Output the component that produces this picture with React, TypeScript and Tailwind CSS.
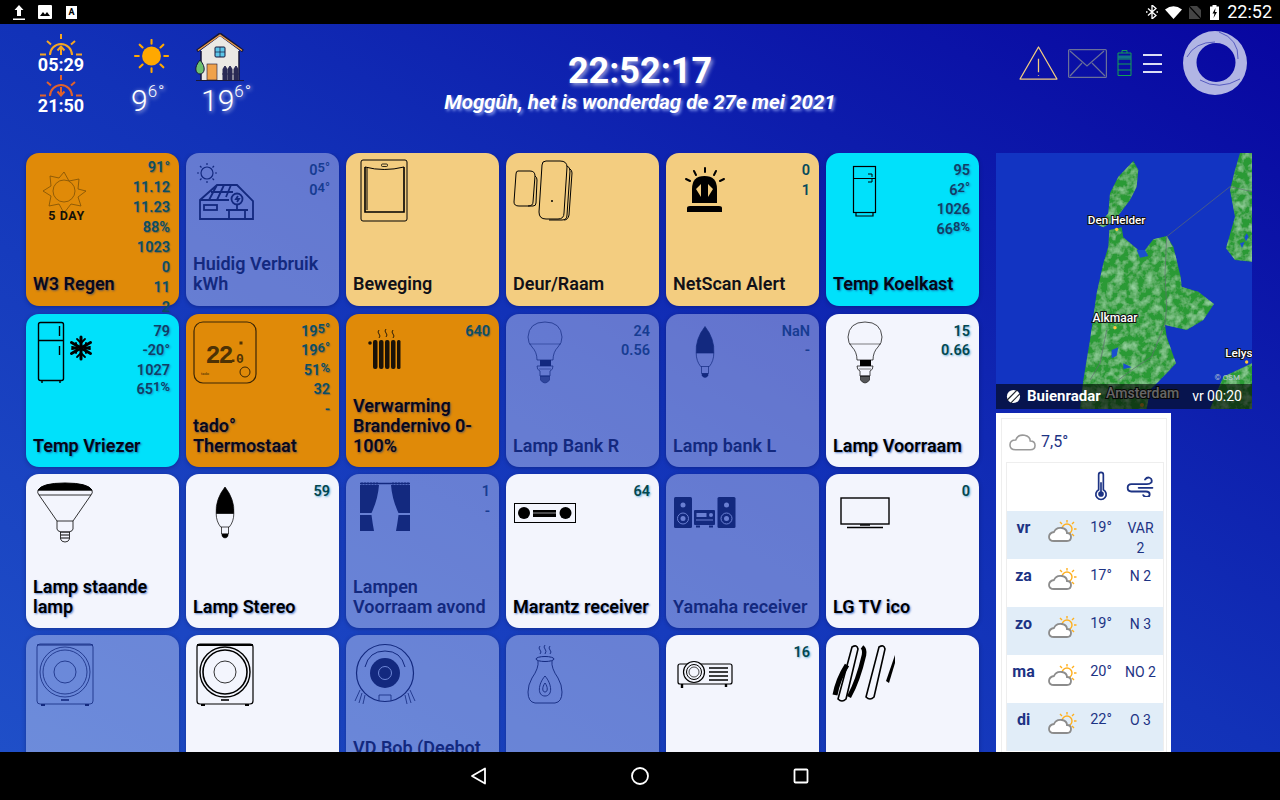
import type { ReactNode } from "react";

type Val = string | [string, string];
type Tone = "orange" | "yellow" | "cyan" | "off" | "on";
type Tile = { name?: ReactNode; tone: Tone; icon: ReactNode; values?: Val[]; tight?: boolean };

const tones: Record<Tone, { bg: string; name: string; val: string }> = {
  orange: {
    bg: "bg-[#e08a08] text-[#1a1208]",
    name: "text-[#08081c] [text-shadow:1px_1px_2px_rgba(40,60,120,0.6)]",
    val: "text-[#0a4f63] [text-shadow:1px_1px_1px_rgba(30,60,120,0.45)]",
  },
  yellow: {
    bg: "bg-[#f3cd80] text-black",
    name: "text-[#111118]",
    val: "text-[#064a5c]",
  },
  cyan: {
    bg: "bg-[#00e1fb] text-black",
    name: "text-[#060616] [text-shadow:1px_1px_2px_rgba(30,50,130,0.6)]",
    val: "text-[#123f66] [text-shadow:1px_1px_2px_rgba(30,50,130,0.4)]",
  },
  off: {
    bg: "bg-white/35 text-[#13297f]",
    name: "text-[#13297f]",
    val: "text-[#173c92]",
  },
  on: {
    bg: "bg-[#f3f5fd] text-black",
    name: "text-black [text-shadow:1px_1px_2px_rgba(20,80,190,0.65)]",
    val: "text-[#03474f] [text-shadow:1px_1px_2px_rgba(20,130,190,0.6)]",
  },
};

const Ic = ({ children }: { children: ReactNode }) => (
  <svg viewBox="0 0 80 75" className="w-[80px] h-[75px] shrink-0 overflow-visible" fill="none" stroke="currentColor" strokeWidth="1">
    {children}
  </svg>
);

const FiveDay = () => (
  <Ic>
    <g stroke="#7c5007" strokeWidth="0.8">
      <circle cx="38" cy="38" r="11" />
      <path d="M38 19l5 9 10-2-1 10 8 2-8 6 3 9-10-2-7 9-5-9-10 2 2-10-8-5 8-5-1-10 9 2z" />
    </g>
    <text x="40.500" y="67" textAnchor="middle" fontSize="12.500" fontWeight="700" letterSpacing="0.6" fill="#141008" stroke="none">5 DAY</text>
  </Ic>
);

const SolarHouse = () => (
  <Ic>
    <circle cx="21" cy="20" r="6" strokeWidth="1.200" />
    <path d="M21 10v2M21 28v2M11 20h2M29 20h2M14 13l1.500 1.500M28 13l-1.500 1.500M14 27l1.500-1.500M28 27l-1.500-1.500" strokeWidth="1.200" />
    <g strokeWidth="1.800">
      <path d="M14 66V47L31 32h20l16 16v18zM14 47h29M31 32l-8 15M38 32l-7 15M45 32l-5 12M25 39h22" />
      <rect x="18" y="52" width="13" height="5" />
      <path d="M43 66V57h16v9M40 57h22" />
      <circle cx="51" cy="46" r="5.500" />
      <path d="M52 43l-2 3h3l-2 3M51 52v5" />
    </g>
  </Ic>
);

const Panel = () => (
  <Ic>
    <rect x="15" y="7" width="46" height="61" rx="2" />
    <path d="M19 14q19 5 39 0" />
    <path d="M19 14v45h39V14" strokeWidth="1.600" />
    <path d="M21 15v42" />
    <rect x="35.500" y="11" width="6" height="2.500" rx="1" strokeWidth="0.800" />
  </Ic>
);

const DoorSensor = () => (
  <Ic>
    <path d="M12 18h12q5 0 5 5l-2 26q0 4-5 4H13q-5 0-5-4l2-28q0-3 2-3z" />
    <path d="M29 23q2 1 2 4l-1 23q0 3-3 3h-5" />
    <path d="M40 8h14q7 0 7 6l-3 46q0 6-6 6H40q-7 0-7-7l3-47q0-4 4-4z" />
    <path d="M61 13q3 1 3 5l-3 44q0 5-5 5H43M64 16q2 1 2 4l-3 42q-1 5-5 5" />
    <circle cx="46" cy="48" r="0.600" fill="currentColor" />
  </Ic>
);

const Siren = () => (
  <Ic>
    <path d="M26 50V36q0-13 12.500-13T51 36v14z" fill="currentColor" stroke="none" />
    <path d="M21 55q0-2 3-2h29q3 0 3 2v4H21z" fill="currentColor" stroke="none" />
    <path d="M35 31l-5 5 5 8zM42 31l5 5-5 8z" fill="#f3cd80" stroke="none" />
    <path d="M39 15v4M28 18l2 4M50 18l-2 4M20 26l4 2M58 26l-4 2" strokeWidth="2" strokeLinecap="round" />
  </Ic>
);

const Fridge = () => (
  <Ic>
    <rect x="27.500" y="13.500" width="22" height="46" strokeWidth="1.200" />
    <path d="M27.500 25.500h22M30 60v3h17v-3" strokeWidth="1.200" />
    <path d="M42 21h4v3M42 29h4v-3" strokeWidth="1" />
  </Ic>
);

const FreezerIcon = () => (
  <Ic>
    <rect x="12.500" y="8.500" width="25" height="58" rx="2" strokeWidth="1.400" />
    <path d="M12.500 26.500h25M33.500 12v10M33.500 32v9M16 67v2M34 67v2" strokeWidth="1.400" />
    <g strokeLinecap="round">
      <path d="M55 23v22M45.500 28.500l19 11M64.500 28.500l-19 11" strokeWidth="3" />
      <path d="M51 25l4 4 4-4M51 43l4-4 4 4M46 33l5 1-1-5M64 33l-5 1 1-5M46 35l5-1-1 5M64 35l-5-1 1 5" strokeWidth="1.800" />
    </g>
  </Ic>
);

const Tado = () => (
  <Ic>
    <rect x="8" y="8" width="62" height="61" rx="9" stroke="#3b2606" strokeWidth="1.200" />
    <g fill="#4d3205" stroke="none" fontWeight="700" fontFamily="'Liberation Mono',monospace">
      <text x="19.500" y="48.500" fontSize="25" letterSpacing="-2">22</text>
      <rect x="46" y="45.500" width="2.500" height="2.500" />
      <text x="50" y="48.500" fontSize="13">0</text>
      <rect x="53.500" y="27.500" width="3" height="3" />
    </g>
    <circle cx="59" cy="58" r="5" stroke="#3b2606" />
    <text x="15" y="61" fontSize="4" fill="#3b2606" stroke="none">tado</text>
  </Ic>
);

const Radiator = () => (
  <Ic>
    <g fill="currentColor" stroke="none">
      <rect x="27" y="26" width="4.500" height="29" rx="2" />
      <rect x="33" y="26" width="4.500" height="29" rx="2" />
      <rect x="39" y="26" width="4.500" height="29" rx="2" />
      <rect x="45" y="26" width="4.500" height="29" rx="2" />
      <rect x="51" y="26" width="3.500" height="29" rx="1.500" />
      <circle cx="24" cy="29" r="1.800" />
    </g>
    <path d="M33 16q-2 2 0 4t0 4M40 15q-2 2 0 4t0 4M47 16q-2 2 0 4t0 4" strokeWidth="0.900" />
  </Ic>
);

const Bulb = () => (
  <Ic>
    <path d="M31 46q0-8-5-13-4-4-4-10 1-15 17-15t17 15q0 6-4 10-5 5-5 13z" strokeWidth="0.700" />
    <path d="M23 30h32" strokeWidth="0.500" />
    <rect x="34" y="46" width="11" height="6" fill="currentColor" stroke="none" />
    <path d="M31 52q0 4 3 5v5h10v-5q3-1 3-5z" strokeWidth="0.700" />
    <path d="M33 55h12" strokeWidth="0.500" />
    <path d="M34.500 62h9v4q-2 3-4.500 3t-4.500-3z" fill="currentColor" fillOpacity="0.650" strokeWidth="0.600" />
  </Ic>
);

const Candle = ({ top = 12.5 }: { top?: number }) => (
  <Ic>
    <g transform={`translate(0 ${top - 12.5})`}>
      <path d="M30.200 39q-1-14 8.800-26.500Q48.800 25 47.800 39z" fill="currentColor" stroke="currentColor" strokeWidth="0.700" />
      <path d="M30.200 39q0 8 4.500 13.500h8.600q4.500-5.500 4.500-13.500" strokeWidth="0.700" />
      <path d="M35.500 52.500v7h7v-7" strokeWidth="0.700" />
      <path d="M36 59.500h6v2q-1 2-3 2t-3-2z" fill="currentColor" strokeWidth="0.500" />
    </g>
  </Ic>
);

const ParLamp = () => (
  <Ic>
    <path d="M12 16q4-7 27-7t27 7z" fill="currentColor" stroke="currentColor" />
    <path d="M12 16h54q1 3-1 5H13q-2-2-1-5zM13 21l18 26h16l18-26" strokeWidth="0.800" />
    <path d="M31 47v8q0 2 4 3h8q4-1 4-3v-8" strokeWidth="0.800" />
    <path d="M34.500 58h9v7q-1 3-4.500 3t-4.500-3z" strokeWidth="0.800" />
    <path d="M35 61h8M35 64h8" strokeWidth="1" />
  </Ic>
);

const Curtains = () => (
  <Ic>
    <path d="M14 9.500h50" strokeWidth="1.400" />
    <path d="M14 11h19q-1 14-7.500 28H14zM64 11H45q1 14 7.500 28H64zM14 41h11.500q1 8 2.500 16H14zM64 41H52.500q-1 8-2.500 16h14z" fill="currentColor" stroke="none" />
    <path d="M16 8v3M19 8v3M22 8v3M25 8v3M28 8v3M31 8v3M47 8v3M50 8v3M53 8v3M56 8v3M59 8v3M62 8v3" strokeWidth="0.800" />
  </Ic>
);

const Receiver = () => (
  <Ic>
    <rect x="8.500" y="29.500" width="61" height="19" strokeWidth="1" />
    <circle cx="18" cy="39" r="6" fill="currentColor" stroke="none" />
    <circle cx="59.500" cy="39" r="6" fill="currentColor" stroke="none" />
    <rect x="27" y="36" width="23" height="7" fill="currentColor" stroke="none" />
    <path d="M25 39h27" stroke="#f3f5fd" strokeWidth="0.600" />
  </Ic>
);

const Speaker = ({ x }: { x: number }) => (
  <g transform={`translate(${x} 23)`}>
    <rect width="18" height="31" rx="1.500" fill="currentColor" stroke="none" />
    <circle cx="9" cy="8" r="2.500" fill="#6a7fd2" stroke="none" />
    <circle cx="9" cy="21.500" r="5.500" stroke="#6a7fd2" />
    <circle cx="9" cy="21.500" r="2.500" fill="#6a7fd2" stroke="none" />
  </g>
);

const HiFi = () => (
  <Ic>
    <Speaker x={8} />
    <Speaker x={51.5} />
    <rect x="28" y="36" width="21" height="15" rx="1" fill="currentColor" stroke="none" />
    <rect x="30.500" y="39" width="10" height="4" fill="#6a7fd2" stroke="none" />
    <circle cx="45" cy="41" r="2" fill="#6a7fd2" stroke="none" />
    <path d="M30 46h17" stroke="#6a7fd2" />
    <path d="M30 52.500h4M43 52.500h4" strokeWidth="2" />
  </Ic>
);

const Tv = () => (
  <Ic>
    <rect x="15" y="24" width="48" height="26" strokeWidth="1.400" />
    <path d="M34 51h10M21 53.500h36" strokeWidth="1.600" />
  </Ic>
);

const Sub = ({ thick }: { thick?: boolean }) => (
  <Ic>
    <rect x="11" y="9" width="56" height="60" rx="3" strokeWidth={thick ? 1.2 : 0.8} />
    <path d="M11 10h56" strokeWidth={thick ? 2 : 1} />
    <circle cx="39" cy="37" r="25" strokeWidth={thick ? 1.4 : 0.8} />
    <circle cx="39" cy="37" r="22" strokeWidth={thick ? 1.6 : 0.8} />
    <circle cx="39" cy="37" r="11" strokeWidth="0.800" />
    <path d="M35 65h8" strokeWidth="1.600" />
    <path d="M15 70h4M59 70h4" strokeWidth="2.200" />
  </Ic>
);

const Robot = () => (
  <Ic>
    <circle cx="39" cy="38" r="28.500" strokeWidth="1.200" />
    <path d="M19 32q4-16 20-16t20 16" strokeWidth="1" />
    <circle cx="39" cy="38" r="15" fill="currentColor" stroke="none" />
    <circle cx="39" cy="38" r="6.500" stroke="#6f88d8" />
    <path d="M33 66v-6h12v6M14 55l-5 11M16 58l-3 10M19 60l-2 9M64 55l5 11M62 58l3 10M59 60l2 9" strokeWidth="0.800" />
  </Ic>
);

const Burner = () => (
  <Ic>
    <path d="M34 11q-2 2 0 4t0 4M39 10q-2 2 0 4t0 5M44 11q-2 2 0 4t0 4" strokeWidth="0.900" />
    <ellipse cx="39" cy="24" rx="9" ry="2.500" />
    <path d="M32 26q1 7-6 17-4 7-4 14 0 10 7 11h20q7-1 7-11 0-7-4-14-7-10-6-17" strokeWidth="0.900" />
    <path d="M39 41c-7 8-8 20 0 20s7-12 0-20z" strokeWidth="0.900" />
    <path d="M39 48c-3 4-3 9 0 9s3-5 0-9z" strokeWidth="0.900" />
  </Ic>
);

const Projector = () => (
  <Ic>
    <rect x="12" y="29" width="54" height="20" rx="2" strokeWidth="1.200" />
    <circle cx="28" cy="37" r="10.500" fill="#f3f5fd" strokeWidth="1.200" />
    <circle cx="28" cy="37" r="7.500" strokeWidth="1" />
    <circle cx="28" cy="37" r="5" strokeWidth="0.700" />
    <path d="M43 33h19M43 37h19M43 41h19M43 45h19" strokeWidth="1.600" />
    <path d="M16 49v4M60 49v3" strokeWidth="2.400" />
  </Ic>
);

const Scribble = () => (
  <Ic>
    <path d="M26 12q5-3 6 2L20 64q-4 4-8 0z" strokeWidth="1.600" />
    <path d="M53 12q5-3 6 2L48 62q-4 4-8 0z" strokeWidth="1.600" />
    <path d="M9 60Q12 44 21 30" strokeWidth="5" />
    <path d="M23 62Q32 46 38 20q1-6-2-8" strokeWidth="4.500" />
    <path d="M60 46L69 20v8l-6 20z" fill="currentColor" stroke="none" />
  </Ic>
);

const tiles: Tile[] = [
  { name: "W3 Regen", tone: "orange", icon: <FiveDay />, tight: true, values: ["91°", "11.12", "11.23", "88%", "1023", "0", "11", "2"] },
  { name: "Huidig Verbruik kWh", tone: "off", icon: <SolarHouse />, values: [["0", "5°"], ["0", "4°"]] },
  { name: "Beweging", tone: "yellow", icon: <Panel /> },
  { name: "Deur/Raam", tone: "yellow", icon: <DoorSensor /> },
  { name: "NetScan Alert", tone: "yellow", icon: <Siren />, values: ["0", "1"] },
  { name: "Temp Koelkast", tone: "cyan", icon: <Fridge />, values: ["95", ["6", "2°"], "1026", ["66", "8%"]] },
  { name: "Temp Vriezer", tone: "cyan", icon: <FreezerIcon />, values: ["79", "-20°", "1027", ["65", "1%"]] },
  { name: <>tado°<br />Thermostaat</>, tone: "orange", icon: <Tado />, values: [["19", "5°"], ["19", "6°"], ["51", "%"], "32", "-"] },
  { name: "Verwarming Brandernivo 0-100%", tone: "orange", icon: <Radiator />, values: ["640"] },
  { name: "Lamp Bank R", tone: "off", icon: <Bulb />, values: ["24", "0.56"] },
  { name: "Lamp bank L", tone: "off", icon: <Candle />, values: ["NaN", "-"] },
  { name: "Lamp Voorraam", tone: "on", icon: <Bulb />, values: ["15", "0.66"] },
  { name: "Lamp staande lamp", tone: "on", icon: <ParLamp /> },
  { name: "Lamp Stereo", tone: "on", icon: <Candle top={13} />, values: ["59"] },
  { name: "Lampen Voorraam avond", tone: "off", icon: <Curtains />, values: ["1", "-"] },
  { name: "Marantz receiver", tone: "on", icon: <Receiver />, values: ["64"] },
  { name: "Yamaha receiver", tone: "off", icon: <HiFi /> },
  { name: "LG TV ico", tone: "on", icon: <Tv />, values: ["0"] },
  { tone: "off", icon: <Sub /> },
  { tone: "on", icon: <Sub thick /> },
  { name: <>VD Bob (Deebot<br />&nbsp;</>, tone: "off", icon: <Robot /> },
  { tone: "off", icon: <Burner /> },
  { tone: "on", icon: <Projector />, values: ["16"] },
  { tone: "on", icon: <Scribble /> },
];

const forecast = [
  { day: "vr", temp: "19°", wind: "VAR 2" },
  { day: "za", temp: "17°", wind: "N 2" },
  { day: "zo", temp: "19°", wind: "N 3" },
  { day: "ma", temp: "20°", wind: "NO 2" },
  { day: "di", temp: "22°", wind: "O 3" },
];

const TileCard = ({ tile, first }: { tile: Tile; first: boolean }) => {
  const tone = tones[tile.tone];
  return (
    <div className={`flex flex-col rounded-[13px] shadow-[0_1px_4px_rgba(0,0,40,0.3)] ${tone.bg}`}>
      <div className="flex h-[75px] justify-between">
        {tile.icon}
        <div className={`pr-[9px] text-right text-[14.500px] font-semibold ${tile.tight ? "pt-[5px] leading-[20px]" : "pt-[8px] leading-[19.500px]"} ${tone.val}`}>
          {tile.values?.map((v, i) => (
            <div key={i}>
              {typeof v === "string" ? v : (
                <>
                  {v[0]}
                  <span className="relative -top-[3px] text-[13px]">{v[1]}</span>
                </>
              )}
            </div>
          ))}
        </div>
      </div>
      <div className={`mt-auto px-[7px] text-[18px] font-semibold leading-[20px] ${first ? "pb-[12px]" : "pb-[11px]"} ${tone.name}`}>{tile.name}</div>
    </div>
  );
};

const SunTime = ({ color, down }: { color: string; down?: boolean }) => (
  <svg viewBox="0 0 42 22" className="w-[42px] h-[22px]" fill="none" stroke={color} strokeWidth="2">
    <path d="M10 21a11 11 0 0 1 22 0" />
    <path d="M0 20.500h6M36 20.500h6M21 0v5M7 7l4 3.500M35 7l-4 3.500" />
    {down ? <path d="M21 12v8M17.500 16.500l3.500 4 3.500-4" /> : <path d="M21 21v-8M17.500 16.500l3.500-4 3.500 4" />}
  </svg>
);

const SunIcon = () => (
  <svg viewBox="0 0 40 36" className="ml-[1px] w-[40px] h-[34px]" fill="none" stroke="#ffa800" strokeWidth="2.200" strokeLinecap="round">
    <circle cx="19.500" cy="18" r="10" fill="#ffa800" stroke="none" />
    <path d="M19.500 1v4M19.500 31v4M2 18h4M33 18h4M7 6l3 3M32 6l-3 3M7 30l3-3M32 30l-3-3" />
  </svg>
);

const HouseIcon = () => (
  <svg viewBox="0 0 50 48" className="w-[50px] h-[48px]">
    <path d="M6 17L25 3l19 14v30H6z" fill="#ebe9e4" />
    <path d="M6 18v29M44 18v29" stroke="#17173a" strokeWidth="1.500" />
    <path d="M2 18L25 1l23 17" fill="none" stroke="#17173a" strokeWidth="3" />
    <path d="M3 17.500L25 2l22 15.500" fill="none" stroke="#f0a24a" strokeWidth="1.400" />
    <rect x="20" y="14" width="10" height="10" rx="1" fill="#5cc6e8" stroke="#17173a" />
    <path d="M25 14v10M20 19h10" stroke="#17173a" strokeWidth="0.700" />
    <rect x="12" y="31" width="10" height="16" fill="#f0a24a" stroke="#17173a" strokeWidth="0.600" />
    <path d="M5 27c-7 8-4 14 0 14s7-6 0-14z" fill="#6cc070" stroke="#17173a" />
    <path d="M28 47V36l2-3 2 3v11zM33 47V36l2-3 2 3v11zM39 47V36l2-3 2 3v11zM27 41h17" fill="#2a2a55" stroke="#2a2a55" />
    <path d="M1 47.500h48" stroke="#17173a" />
  </svg>
);

const Temp = ({ value }: { value: string }) => (
  <div className="whitespace-nowrap text-[30px] font-light leading-[36px] text-white [text-shadow:1px_1px_4px_rgba(255,255,255,0.8)]">
    {value}
    <span className="relative -top-[14px] text-[17px] tracking-[1px]">6°</span>
  </div>
);

const Logo = () => (
  <svg viewBox="0 0 64 64" className="w-[64px] h-[64px]">
    <path fillRule="evenodd" d="M32 0a32 32 0 1 0 0 64a32 32 0 1 0 0-64zM33 12a19.500 19.500 0 1 1 0 39a19.500 19.500 0 1 1 0-39z" fill="#b1b5e4" />
    <path d="M4 26Q12 11 32 11M36 1Q56 8 55 28M17 49Q36 60 57 48" fill="none" stroke="#1a1fa8" strokeWidth="0.600" />
  </svg>
);

const PartlyCloudy = () => (
  <svg viewBox="0 0 30 24" className="mx-auto w-[30px] h-[24px]" fill="none">
    <circle cx="20" cy="10" r="5" stroke="#ffb01f" strokeWidth="1.400" />
    <path d="M20 1v2.500M27 3l-2 2M29.500 10H27M27 17l-2-2M13 3l2 2" stroke="#ffb01f" strokeWidth="1.400" />
    <path d="M7 22q-5 0-5-4t5-5q2-5 8-4 5 1 5 5 4 0 4 4t-4 4z" fill="#fff" stroke="#8c8c8c" strokeWidth="1.800" />
  </svg>
);

const RadarMap = () => (
  <div className="relative h-[256px] w-[256px] overflow-hidden bg-[#1234c2]">
    <svg viewBox="18 9 768 768" className="h-[256px] w-[256px]">
      <defs>
        <filter id="speck" x="0" y="0" width="100%" height="100%">
          <feTurbulence type="fractalNoise" baseFrequency="0.045" numOctaves="3" seed="4" />
          <feColorMatrix values="0 0 0 0 0.30  0 0 0 0 0.64  0 0 0 0 0.34  2 0 0 0 -0.800" />
          <feComposite in2="SourceAlpha" operator="in" result="noise" />
          <feMerge>
            <feMergeNode in="SourceGraphic" />
            <feMergeNode in="noise" />
          </feMerge>
        </filter>
      </defs>
      <g fill="#2a9a34" filter="url(#speck)">
        <path d="M430 33l15 27-5 50-20 40-30 40-20 25-30 17-15-7 30-35 5-60 25-50z" />
        <path d="M358 240l37-8 5 30 45 38h20l25-32 40-10 20 32 22 90 3 30 50 15 47 37-32 48-50 30-65-15 5 35 28 80-28 30-50 50-10 57H270l10-87 20-120 20-140 20-90 15-50z" />
        <path d="M786 9h-36l-15 51-15 60 15 80-27 95 27 35 51 5zM786 640l-86 40-40 97h126z" />
      </g>
      <path d="M530 258l10 20 8 12-22 4z" fill="#7fb487" />
      <path d="M770 250l6 10-8 14-5-12zM750 280l14-5-8 20z" fill="#1a4fcf" />
      <path d="M440 300l25 0 10 18-25 5zM365 600l20-8-5 25-15 8zM400 640l25 12-25 5z" fill="#1a4fcf" />
      <path d="M530 260l190-150 66 15M530 260l-5 110 5 100-5 50-40 100-60 40-40 30M350 540l-20 100-30 50" fill="none" stroke="#5f6b70" strokeWidth="2" />
      <circle cx="380" cy="238" r="5" fill="#ffc83a" />
      <circle cx="375" cy="533" r="5" fill="#ffc83a" />
      <circle cx="770" cy="636" r="5" fill="#ffc83a" />
      <circle cx="456" cy="765" r="6" fill="#d89a2a" />
      <g fill="#fff" stroke="#111" strokeWidth="6" fontWeight="500" style={{ paintOrder: "stroke" }} textAnchor="middle">
        <text x="380" y="221" fontSize="35">Den Helder</text>
        <text x="375" y="517" fontSize="36">Alkmaar</text>
        <text x="706" y="622" fontSize="35" textAnchor="start">Lelystad</text>
        <text x="458" y="745" fontSize="42">Amsterdam</text>
      </g>
      <text x="712" y="689" textAnchor="middle" fontSize="24" fill="#b8c8d0">© OSM</text>
    </svg>
    <div className="absolute inset-x-0 bottom-0 flex h-[25px] items-center justify-between bg-black/60 px-[10px] text-white">
      <div className="flex items-center gap-[6px] text-[15px] font-bold">
        <svg viewBox="0 0 16 16" className="w-[15px] h-[15px]">
          <circle cx="8" cy="8" r="7" fill="#fff" />
          <path d="M1 12L12 1M5 15L15 5" stroke="#20252e" strokeWidth="1.300" />
        </svg>
        Buienradar
      </div>
      <span className="text-[14px]">vr 00:20</span>
    </div>
  </div>
);

const WeatherCard = () => (
  <div className="mt-[4px] h-[360px] w-[175px] bg-white pl-[5px] pr-[4px] pt-[5px] text-[#1d3384]">
    <div className="h-full border border-[#eeeeee] pl-[4px] pr-[2px]">
      <div className="flex h-[43px] items-center gap-[5px] pl-[3px] pt-[2px] text-[16px] leading-none">
        <svg viewBox="0 0 28 18" className="w-[27px] h-[18px]" fill="none">
          <path d="M7 17q-6 0-6-5t6-5q2-6 9-5 6 1 6 6 5 0 5 4.500T22 17z" stroke="#999" strokeWidth="1.600" />
        </svg>
        7,5°
      </div>
      <div className="border-x border-t border-[#eeeeee]">
        <div className="grid h-[48px] grid-cols-[33px_44px_34px_45px] items-center pb-[2px]">
          <span />
          <span />
          <svg viewBox="0 0 14 32" className="mx-auto w-[14px] h-[30px]" fill="none" stroke="#1d3384" strokeWidth="1.800">
            <path d="M4.500 20V4a2.500 2.500 0 0 1 5 0v16a5.500 5.500 0 1 1-5 0z" />
            <circle cx="7" cy="24.500" r="3" fill="#1d3384" stroke="none" />
            <path d="M7 12v12" />
          </svg>
          <svg viewBox="0 0 32 24" className="mx-auto w-[31px] h-[22px]" fill="none" stroke="#1d3384" strokeWidth="2" strokeLinecap="round">
            <path d="M21 5q2-3 5-2t2 5q-2 2-5 2H6q-4 0-4 4t4 4h16q4 0 4 3t-3 3-4-2" />
            <path d="M14 14h15" />
          </svg>
        </div>
        {forecast.map((f, i) => (
          <div key={f.day} className={`grid h-[48px] grid-cols-[33px_44px_34px_45px] pt-[7px] text-center text-[14.500px] leading-[20px] ${i % 2 === 0 ? "bg-[#e1edf8]" : "bg-white"}`}>
            <span className="text-[16px] font-bold">{f.day}</span>
            <div className="pt-[1px]"><PartlyCloudy /></div>
            <span>{f.temp}</span>
            <span className="px-[5px] text-[14px]">{f.wind}</span>
          </div>
        ))}
      </div>
    </div>
  </div>
);

export default function App() {
  return (
    <div className="flex h-[800px] w-[1280px] flex-col overflow-hidden [font-family:Roboto,sans-serif]">
      {/* status bar */}
      <div className="flex h-[24px] shrink-0 items-center justify-between bg-black pl-[13px] pr-[8px] text-white">
        <div className="flex items-center gap-[13px]">
          <svg viewBox="0 0 12 15" className="w-[12px] h-[15px]" fill="#fff">
            <path d="M6 0l4.500 5H8v6H4V5H1.500zM0 13.500h12V15H0z" />
          </svg>
          <svg viewBox="0 0 14 14" className="w-[14px] h-[14px]">
            <rect width="14" height="14" rx="1" fill="#fff" />
            <path d="M2 11l3-4 2 2.500L9 7l3 4z" fill="#000" />
          </svg>
          <div className="ml-[1px] flex h-[13px] w-[11px] items-start justify-center bg-white text-[9px] font-bold leading-[12px] text-black">A</div>
        </div>
        <div className="flex items-center">
          <svg viewBox="0 0 12 14" className="w-[12px] h-[14px]" fill="none" stroke="#fff" strokeWidth="1.300">
            <path d="M2 3.500l8 7L6 14V0l4 3.500-8 7" />
            <path d="M0 7h1.500M10.500 7H12" />
          </svg>
          <svg viewBox="0 0 17 13" className="ml-[7px] w-[17px] h-[13px]" fill="#fff">
            <path d="M0 3.500Q8.500-3 17 3.500L8.500 13z" />
          </svg>
          <svg viewBox="0 0 12 13" className="ml-[7px] w-[12px] h-[13px]">
            <path d="M0 0h8l4 4v9H0z" fill="#444" />
            <path d="M0 0l12 13" stroke="#000" strokeWidth="1.200" />
          </svg>
          <svg viewBox="0 0 9 15" className="ml-[9px] w-[9px] h-[15px]">
            <path d="M2.500 0h4v1.500H9V15H0V1.500h2.500z" fill="#fff" />
            <path d="M5.500 3L2.500 8.500h2L3.500 13l3.500-6H5z" fill="#000" />
          </svg>
          <span className="ml-[8px] text-[18px] leading-none">22:52</span>
        </div>
      </div>

      <div className="flex min-h-0 flex-1 flex-col bg-[linear-gradient(30deg,#1f4fc8_0%,#1232b8_50%,#0806a0_100%)]">
        {/* header */}
        <div className="grid h-[129px] shrink-0 grid-cols-[1fr_auto_1fr]">
          <div className="flex pl-[38px] pt-[10px]">
            <div className="flex w-[46px] flex-col items-center text-[18px] font-bold leading-[17px] text-white">
              <SunTime color="#f5a623" />
              <span>05:29</span>
              <div className="mt-[2px]"><SunTime color="#e2622b" down /></div>
              <span>21:50</span>
            </div>
            <div className="ml-[47px] pt-[5px]">
              <SunIcon />
              <div className="mt-[10px]"><Temp value="9" /></div>
            </div>
            <div className="ml-[23px] -mt-[1px]">
              <HouseIcon />
              <div className="mt-[2px] pl-[6px]"><Temp value="19" /></div>
            </div>
          </div>

          <div className="pt-[27px] text-center text-white">
            <div className="text-[36px] font-bold leading-[40px] [text-shadow:2px_2px_4px_rgba(255,255,255,0.6)]">22:52:17</div>
            <div className="text-[20.500px] font-bold italic leading-[22px] [text-shadow:2px_2px_3px_rgba(170,190,255,0.7)]">
              Moggûh, het is wonderdag de 27e mei 2021
            </div>
          </div>

          <div className="flex items-start justify-end pr-[33px] pt-[7px]">
            <svg viewBox="0 0 40 35" className="mt-[15px] w-[39px] h-[34px]" fill="none" stroke="#f3cd80" strokeWidth="1.300">
              <path d="M20 1l19 33H1z" strokeLinejoin="round" />
              <path d="M20 13v14M20 30v1" />
            </svg>
            <svg viewBox="0 0 39 29" className="ml-[10px] mt-[18px] w-[39px] h-[29px]" fill="none" stroke="#6a7099" strokeWidth="1.200">
              <rect x="0.600" y="0.600" width="37.800" height="27.800" rx="1" />
              <path d="M2 2l17 15L36 2M2 27l12-13M37 27L24 14" />
            </svg>
            <svg viewBox="0 0 15 26" className="ml-[10px] mt-[19px] w-[15px] h-[26px]" fill="none" stroke="#12a155" strokeWidth="1">
              <path d="M5 3V0.500h5V3M1 3h13v22.500H1zM1 9h13M1 14h13M1 20h13" />
              <path d="M1 7h13" stroke="#12728a" strokeWidth="3" />
            </svg>
            <div className="ml-[11px] mt-[23px] flex w-[19px] flex-col gap-[6.500px]">
              <div className="h-[2px] bg-[#dcdef5]" />
              <div className="h-[2px] bg-[#dcdef5]" />
              <div className="h-[2px] bg-[#dcdef5]" />
            </div>
            <div className="ml-[21px]"><Logo /></div>
          </div>
        </div>

        {/* tiles + side column */}
        <div className="flex min-h-0 flex-1 gap-[17px] overflow-hidden pl-[26px]">
          <div className="grid w-[953px] shrink-0 grid-cols-6 grid-rows-[153px_153px_153.500px_153.500px] gap-x-[7px] gap-y-[7.500px]">
            {tiles.map((tile, i) => (
              <TileCard key={i} tile={tile} first={i < 6} />
            ))}
          </div>
          <div className="w-[256px] shrink-0">
            <RadarMap />
            <WeatherCard />
          </div>
        </div>
      </div>

      {/* nav bar */}
      <div className="flex h-[48px] shrink-0 items-center justify-center gap-[141px] bg-black">
        <svg viewBox="0 0 20 20" className="w-[20px] h-[20px]" fill="none" stroke="#fff" strokeWidth="1.800">
          <path d="M16 2.500v15L3 10z" strokeLinejoin="round" />
        </svg>
        <svg viewBox="0 0 20 20" className="w-[20px] h-[20px]" fill="none" stroke="#fff" strokeWidth="1.800">
          <circle cx="10" cy="10" r="8" />
        </svg>
        <svg viewBox="0 0 20 20" className="w-[20px] h-[20px]" fill="none" stroke="#fff" strokeWidth="1.800">
          <rect x="3.500" y="3.500" width="13" height="13" rx="1" />
        </svg>
      </div>
    </div>
  );
}
